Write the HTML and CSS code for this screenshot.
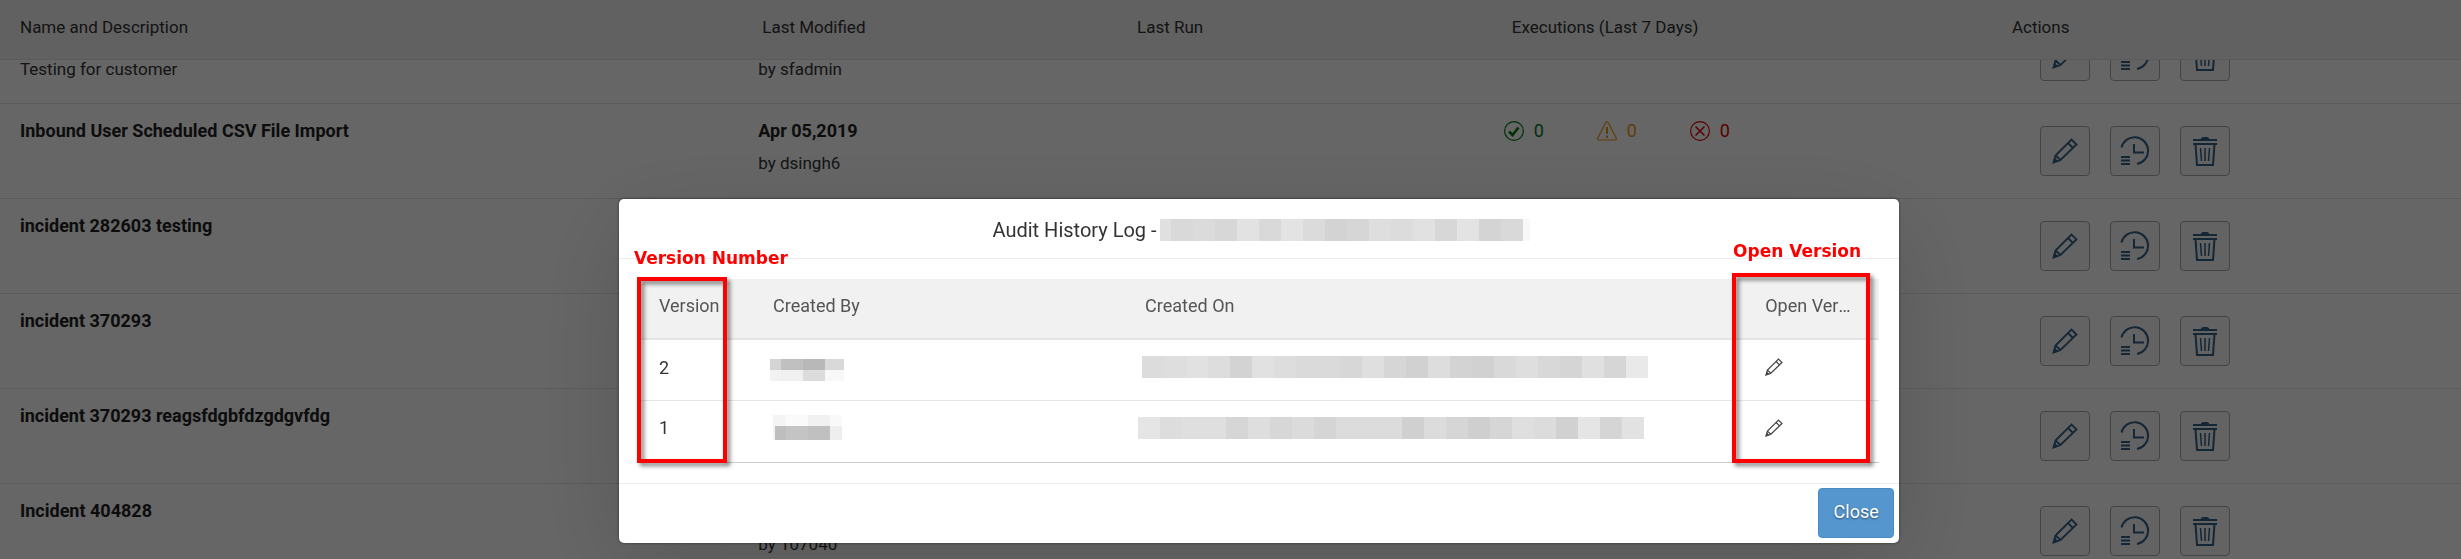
FILE: index.html
```
<!DOCTYPE html>
<html lang="en">
<head>
    <meta charset="UTF-8">
    <meta name="viewport" content="width=device-width, initial-scale=1.0">
    <title>Integration Center</title>
    <link rel="stylesheet" href="styles.css">
</head>
<body>

    <!-- Icon set -->
    <svg class="icon-set" aria-hidden="true">
        <symbol id="pencil" viewBox="0 0 26 26">
            <path d="M1.500 24.500 3.500 17.500 19.500 1.500 24.500 6.500 8.500 22Z M16 5 21 10 M3.500 17.500 8.500 22" fill="none" stroke="currentColor" stroke-width="1.800"/>
            <path d="M1 25 2.500 19.500 6.500 23.500Z" fill="currentColor"/>
        </symbol>
        <symbol id="history" viewBox="0 0 30 30">
            <path d="M1.500 11.500A13.500 13.500 0 1 1 17 28" fill="none" stroke="currentColor" stroke-width="2"/>
            <path d="M14 8V16.500H24M1 21H10M1 24.500H10M1 28H10" fill="none" stroke="currentColor" stroke-width="2"/>
        </symbol>
        <symbol id="trash" viewBox="0 0 26 30">
            <path d="M1 4H25M1 8H25" stroke="currentColor" stroke-width="2"/>
            <path d="M9 3V2L11 1H15L17 2V3Z" fill="currentColor"/>
            <path d="M3.500 8 5 29H21L22.500 8" fill="none" stroke="currentColor" stroke-width="2"/>
            <path d="M8.500 12 9.500 25M13 12V25M17.500 12 16.500 25" stroke="currentColor" stroke-width="1.500"/>
        </symbol>
        <symbol id="success" viewBox="0 0 20 20">
            <circle cx="10" cy="10" r="9.400" fill="none" stroke="currentColor" stroke-width="1.200"/>
            <path d="M5 10.500 8.500 14 14.500 6.500" fill="none" stroke="currentColor" stroke-width="2.600"/>
        </symbol>
        <symbol id="warning" viewBox="0 0 20 20">
            <path d="M10 .8Q10.800 .8 11.300 1.800L19.200 17Q19.700 19 18 19H2Q.3 19 .8 17L8.700 1.800Q9.200 .8 10 .8Z" fill="none" stroke="currentColor" stroke-width="1.200"/>
            <path d="M10 6V13M10 14.500V17" stroke="currentColor" stroke-width="2"/>
        </symbol>
        <symbol id="error" viewBox="0 0 20 20">
            <circle cx="10" cy="10" r="9.400" fill="none" stroke="currentColor" stroke-width="1.200"/>
            <path d="M5.500 5.500 14.500 14.500M14.500 5.500 5.500 14.500" stroke="currentColor" stroke-width="1.500"/>
        </symbol>
    </svg>

    <main class="page">
        <table class="grid grid-head">
            <thead>
                <tr>
                    <th class="col-name">Name and Description</th>
                    <th class="col-modified">Last Modified</th>
                    <th class="col-run">Last Run</th>
                    <th class="col-exec">Executions (Last 7 Days)</th>
                    <th class="col-actions">Actions</th>
                </tr>
            </thead>
        </table>

        <!-- Scrolled list -->
        <div class="grid-scroll">
            <table class="grid grid-body">
                <tbody>
                    <tr>
                        <td class="col-name second-line">Testing for customer</td>
                        <td class="col-modified second-line">by sfadmin</td>
                        <td class="col-run"></td>
                        <td class="col-exec"></td>
                        <td class="col-actions"></td>
                    </tr>
                    <tr>
                        <td><strong>Inbound User Scheduled CSV File Import</strong></td>
                        <td><strong>Apr 05,2019</strong>by dsingh6</td>
                        <td></td>
                        <td class="col-exec">
                            <div class="counts">
                                <span class="count ok"><svg><use href="#success"/></svg>0</span>
                                <span class="count warn"><svg><use href="#warning"/></svg>0</span>
                                <span class="count fail"><svg><use href="#error"/></svg>0</span>
                            </div>
                        </td>
                        <td class="col-actions"></td>
                    </tr>
                    <tr>
                        <td><strong>incident 282603 testing</strong></td>
                        <td></td>
                        <td></td>
                        <td></td>
                        <td class="col-actions"></td>
                    </tr>
                    <tr>
                        <td><strong>incident 370293</strong></td>
                        <td></td>
                        <td></td>
                        <td></td>
                        <td class="col-actions"></td>
                    </tr>
                    <tr>
                        <td><strong>incident 370293 reagsfdgbfdzgdgvfdg</strong></td>
                        <td></td>
                        <td></td>
                        <td></td>
                        <td class="col-actions"></td>
                    </tr>
                    <tr>
                        <td><strong>Incident 404828</strong></td>
                        <td class="second-line">by 107040</td>
                        <td></td>
                        <td></td>
                        <td class="col-actions"></td>
                    </tr>
                </tbody>
            </table>
        </div>
    </main>

    <div class="overlay">
        <div class="dialog" role="dialog" aria-labelledby="dialog-title">
            <div class="dialog-header">
                <h1 id="dialog-title">Audit History Log -</h1>
                <span class="mask" data-first="11" data-last="7" data-shades="e0 d9 db d7 e2 d9 e3 db d3 d6 de dc e1 d7 e3 d4 d9 f8"></span>
            </div>

            <div class="dialog-content">
                <table class="log">
                    <thead>
                        <tr>
                            <th class="log-version">Version</th>
                            <th class="log-by">Created By</th>
                            <th class="log-on">Created On</th>
                            <th class="log-open">Open Version</th>
                        </tr>
                    </thead>
                    <tbody>
                        <tr>
                            <td>2</td>
                            <td>
                                <div class="user">
                                    <span class="mask" data-first="11" data-last="19" data-shades="d4 c0 b8 d9"></span>
                                    <span class="mask" data-first="11" data-last="19" data-shades="f2 f0 dc f8"></span>
                                </div>
                            </td>
                            <td><span class="mask date" data-shades="dc de e1 dd d3 e1 dd da da d7 df d6 d1 dd d3 d1 d9 de d8 d5 e0 d6 e9"></span></td>
                            <td><button class="open" aria-label="Open version 2"><svg><use href="#pencil"/></svg></button></td>
                        </tr>
                        <tr>
                            <td>1</td>
                            <td>
                                <div class="user second">
                                    <span class="mask" data-first="11" data-last="12" data-shades="f4 fa f1 f9"></span>
                                    <span class="mask" data-first="11" data-last="12" data-shades="be c4 c0 ee"></span>
                                </div>
                            </td>
                            <td><span class="mask date second" data-shades="e5 dd df df d6 de d7 db d5 dc dc dc d0 dc d6 cf d6 df dc d1 e5 d5 e2"></span></td>
                            <td><button class="open" aria-label="Open version 1"><svg><use href="#pencil"/></svg></button></td>
                        </tr>
                    </tbody>
                </table>
            </div>

            <div class="dialog-footer">
                <button class="close">Close</button>
            </div>

            <!-- Callouts -->
            <span class="note note-version">Version Number</span>
            <div class="frame frame-version"></div>
            <span class="note note-open">Open Version</span>
            <div class="frame frame-open"></div>
        </div>
    </div>

    <script>
        // Same three actions on every row
        const actions = [['pencil', 'Edit'], ['history', 'Audit history'], ['trash', 'Delete']];

        document.querySelectorAll('.grid-body .col-actions').forEach((cell) => {
            cell.innerHTML = '<div class="actions">' + actions.map(([icon, label]) =>
                `<button class="action ${icon}" aria-label="${label}"><svg><use href="#${icon}"/></svg></button>`
            ).join('') + '</div>';
        });

        // Masked values are strips of grey blocks, 22px each unless the ends are cut
        document.querySelectorAll('.mask').forEach((mask) => {
            const shades = mask.dataset.shades.split(' ');
            shades.forEach((shade, i) => {
                const block = document.createElement('i');
                let width = 22;
                if (i === 0 && mask.dataset.first) width = mask.dataset.first;
                if (i === shades.length - 1 && mask.dataset.last) width = mask.dataset.last;
                block.style.width = width + 'px';
                block.style.background = '#' + shade.repeat(3);
                mask.appendChild(block);
            });
        });
    </script>
</body>
</html>
```
FILE: styles.css
```
* {
    margin: 0;
    padding: 0;
    box-sizing: border-box;
}

body {
    font-family: Roboto, Arial, sans-serif;
    font-size: 17px;
    color: #333;
    background: #fff;
}

button {
    font: inherit;
    cursor: pointer;
}

svg {
    display: block;
}

.icon-set {
    position: absolute;
    width: 0;
    height: 0;
}

/* Background list */
.page {
    display: flex;
    flex-direction: column;
    height: 100vh;
    overflow: hidden;
}

.grid {
    width: 100%;
    table-layout: fixed;
    border-collapse: separate;
    border-spacing: 0;
}

.grid th {
    height: 60px;
    padding: 0 0 6px 20px;
    background: #f2f2f2;
    border-bottom: 1px solid #e4e4e4;
    text-align: left;
    font-weight: normal;
}

.grid td {
    height: 95px;
    padding: 10px 0 0 16px;
    border-bottom: 1px solid #e4e4e4;
    vertical-align: top;
    line-height: 33px;
}

.grid td:first-child {
    padding-left: 20px;
}

.grid td.second-line {
    padding-top: 50px;
    line-height: 20px;
}

.grid strong {
    display: block;
    font-size: 18px;
    color: #222;
}

.col-name { width: 30.16%; }
.col-modified { width: 15.23%; }
.col-run { width: 15.23%; }
.col-exec { width: 20.32%; }

.grid-scroll {
    flex: 1;
    overflow: hidden;
}

.grid-body {
    margin-top: -51px;
}

.grid td.col-exec {
    padding-left: 12px;
}

.grid td.col-actions {
    padding: 22px 0 0 48px;
}

.counts {
    display: flex;
}

.count {
    display: flex;
    align-items: center;
    gap: 10px;
    width: 93px;
    font-size: 18px;
}

.count svg {
    width: 20px;
    height: 20px;
}

.ok { color: #007a10; }
.warn { color: #f09a10; }
.fail { color: #e00000; }

.actions {
    display: flex;
    gap: 20px;
}

.action {
    display: flex;
    align-items: center;
    justify-content: center;
    width: 50px;
    height: 50px;
    background: #f7f7f7;
    border: 1px solid #ababab;
    border-radius: 4px;
    color: #346187;
}

.action svg {
    width: 26px;
    height: 26px;
}

.action.history svg {
    width: 30px;
    height: 30px;
}

.action.trash svg {
    height: 30px;
}

/* Dialog */
.overlay {
    position: fixed;
    inset: 0;
    padding: 199px 0 0 25.15%;
    overflow: hidden;
    background: rgba(0, 0, 0, 0.6);
}

.dialog {
    position: relative;
    width: 69.5%;
    background: #fff;
    border-radius: 5px;
    box-shadow: 0 25px 100px rgba(0, 0, 0, 0.15), 0 0 3px rgba(0, 0, 0, 0.5);
    font-size: 18px;
}

.dialog-header {
    display: flex;
    align-items: center;
    justify-content: center;
    gap: 3px;
    height: 60px;
    padding: 2px 0 0 4px;
    border-bottom: 1px solid #ececec;
}

.dialog-header h1 {
    font-size: 20px;
    font-weight: normal;
}

.mask {
    display: flex;
    height: 22px;
}

.dialog-content {
    padding: 20px;
}

.log {
    width: 100%;
    table-layout: fixed;
    border-collapse: separate;
    border-spacing: 0;
    border-bottom: 1px solid #ccc;
}

.log th,
.log td {
    height: 61px;
    padding: 0 20px 6px;
    text-align: left;
    font-weight: normal;
}

.log th {
    background: #f1f1f1;
    border-bottom: 2px solid #e4e4e4;
    color: #555;
    overflow: hidden;
    text-overflow: ellipsis;
    white-space: nowrap;
}

.log td {
    border-bottom: 1px solid #e5e5e5;
}

.log tr:last-child td {
    padding-bottom: 8px;
    border-bottom: none;
}

.log th.log-version {
    width: 9.2%;
    padding-right: 0;
}

.log-by { width: 30%; }
.log-on { width: 50%; }

.user {
    margin: 5px 0 0 -3px;
}

.user .mask {
    height: 11px;
}

.user.second {
    margin: 0;
    border-left: 2px solid #f4f4f4;
}

.user.second .mask:last-child {
    height: 14px;
}

.date {
    margin-left: -3px;
}

.date.second {
    margin-left: -7px;
}

.open {
    display: block;
    background: none;
    border: none;
    color: #444;
}

.open svg {
    width: 18px;
    height: 18px;
}

.dialog-footer {
    display: flex;
    justify-content: flex-end;
    padding: 4px 5px 5px;
    border-top: 1px solid #ececec;
}

.close {
    width: 76px;
    height: 50px;
    padding-bottom: 3px;
    background: #5496cd;
    border: 1px solid #4a8bc4;
    border-radius: 4px;
    color: #fff;
    text-shadow: 0 1px 2px rgba(0, 0, 0, 0.5);
}

/* Callouts drawn over the dialog */
.note {
    position: absolute;
    font: bold 17px/20px "DejaVu Sans", Verdana, sans-serif;
    color: #f00;
}

.frame {
    position: absolute;
    border: 4px solid #f00;
    filter: drop-shadow(3px 3px 2px rgba(0, 0, 0, 0.5));
}

.note-version {
    top: 49px;
    left: 15px;
}

.frame-version {
    top: 78px;
    left: 18px;
    width: 90px;
    height: 186px;
}

.note-open {
    top: 42px;
    right: 38px;
}

.frame-open {
    top: 74px;
    right: 29px;
    width: 138px;
    height: 190px;
}
```
